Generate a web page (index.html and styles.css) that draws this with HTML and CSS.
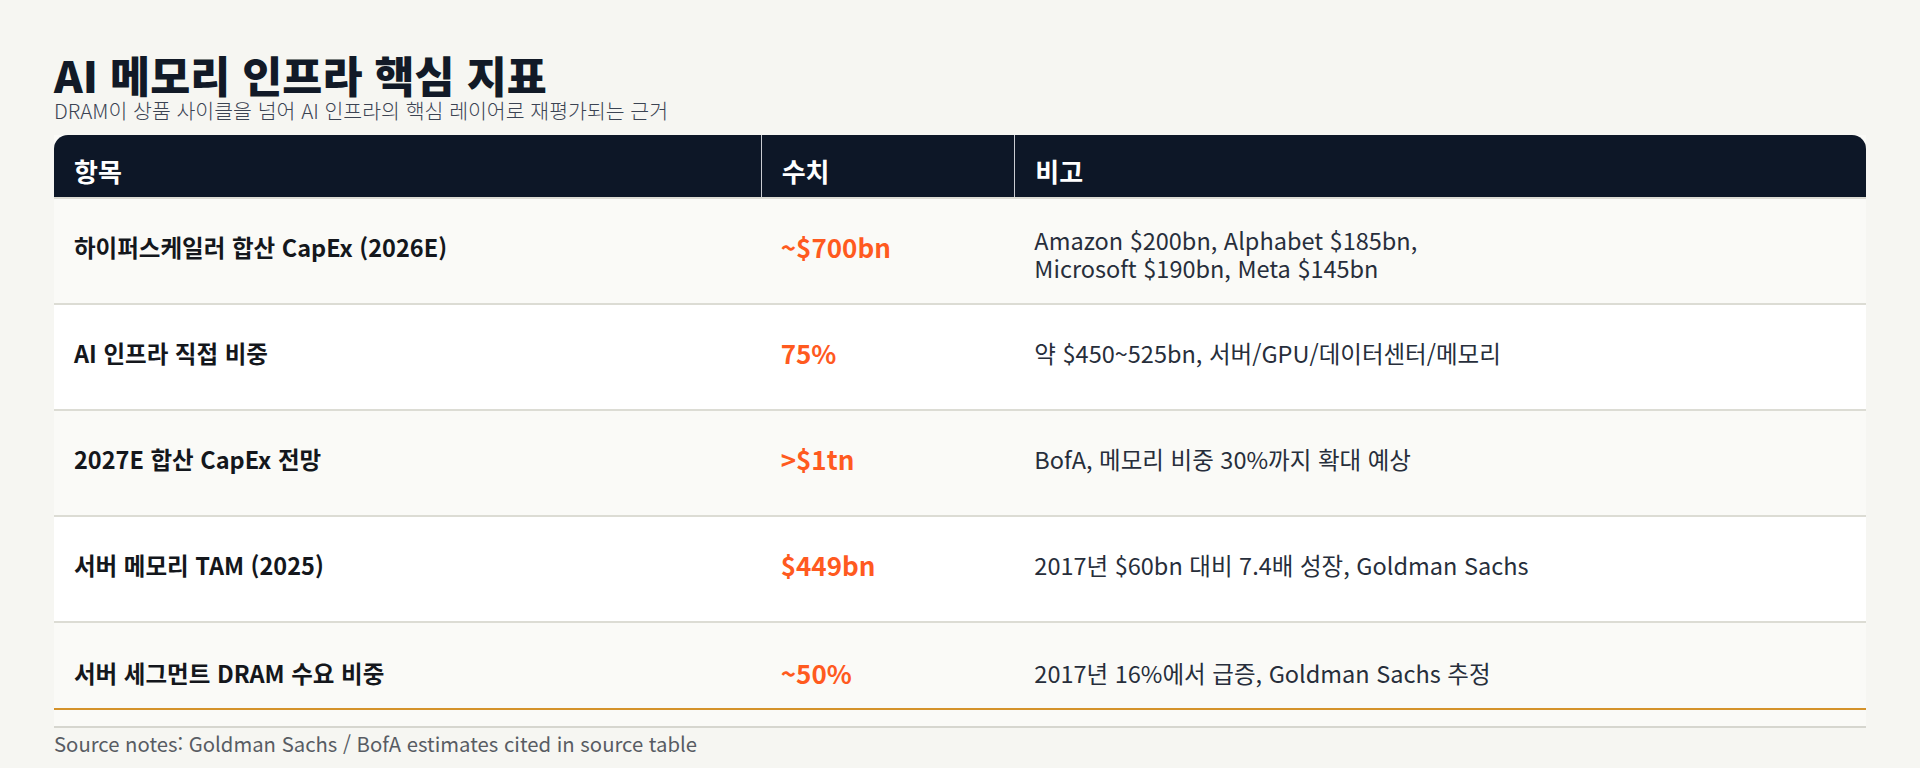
FILE: index.html
```html
<!DOCTYPE html>
<html lang="ko">
<head>
<meta charset="utf-8">
<title>AI 메모리 인프라 핵심 지표</title>
<link rel="stylesheet" href="styles.css">
</head>
<body>
<main class="page">
  <header class="heading">
    <h1 class="title">AI 메모리 인프라 핵심 지표</h1>
    <p class="subtitle">DRAM이 상품 사이클을 넘어 AI 인프라의 핵심 레이어로 재평가되는 근거</p>
  </header>

  <section class="table">
    <div class="row head">
      <div class="cell">항목</div>
      <div class="cell divided">수치</div>
      <div class="cell divided">비고</div>
    </div>
    <div class="row odd">
      <div class="cell label">하이퍼스케일러 합산 CapEx (2026E)</div>
      <div class="cell value">~$700bn</div>
      <div class="cell note two-line">Amazon $200bn, Alphabet $185bn,<br>Microsoft $190bn, Meta $145bn</div>
    </div>
    <div class="row even">
      <div class="cell label">AI 인프라 직접 비중</div>
      <div class="cell value">75%</div>
      <div class="cell note">약 $450~525bn, 서버/GPU/데이터센터/메모리</div>
    </div>
    <div class="row odd">
      <div class="cell label">2027E 합산 CapEx 전망</div>
      <div class="cell value">&gt;$1tn</div>
      <div class="cell note">BofA, 메모리 비중 30%까지 확대 예상</div>
    </div>
    <div class="row even">
      <div class="cell label">서버 메모리 TAM (2025)</div>
      <div class="cell value">$449bn</div>
      <div class="cell note">2017년 $60bn 대비 7.4배 성장, Goldman Sachs</div>
    </div>
    <div class="row odd last">
      <div class="cell label">서버 세그먼트 DRAM 수요 비중</div>
      <div class="cell value">~50%</div>
      <div class="cell note">2017년 16%에서 급증, Goldman Sachs 추정</div>
    </div>
    <div class="table-foot"></div>
  </section>

  <p class="source">Source notes: Goldman Sachs / BofA estimates cited in source table</p>
</main>
</body>
</html>
```

FILE: styles.css
```css
* { box-sizing: border-box; }

html, body {
  margin: 0;
  padding: 0;
}

body {
  background: #f6f6f2;
  font-family: "Noto Sans CJK KR", "Noto Sans", sans-serif;
  color: #14171c;
}

.page {
  padding: 52px 54px 0;
}

.heading {
  margin: 0;
}

.title {
  margin: 0;
  font-size: 43.5px;
  line-height: 46px;
  font-weight: 900;
  color: #121a27;
}

.subtitle {
  margin: 0;
  font-size: 20.5px;
  line-height: 24px;
  font-weight: 300;
  color: #3b4352;
}

.table {
  margin-top: 13px;
  background: #fafaf7;
}

.row {
  display: grid;
  grid-template-columns: 39fr 14fr 47fr;
  align-items: center;
}

.head {
  height: 62px;
  background: #0d1727;
  color: #ffffff;
  border-radius: 14px 14px 0 0;
  align-items: stretch;
}

.head .cell {
  font-size: 26px;
  font-weight: 700;
  line-height: 30px;
  padding: 21px 20px 11px;
}

.head .divided {
  border-left: 1px solid #c9ccd2;
}

.row.odd { background: #fafaf7; }
.row.even { background: #ffffff; }

.row.odd, .row.even {
  height: 106px;
  padding-bottom: 8px;
  border-top: 2px solid #dcdcd4;
}

.row.last {
  height: 89px;
  padding-top: 15px;
  padding-bottom: 0;
  border-bottom: 2px solid #d4922a;
}

.cell {
  padding: 0 20px;
}

.label {
  font-size: 23.5px;
  line-height: 28px;
  font-weight: 700;
  color: #14171c;
}

.value {
  font-size: 26px;
  line-height: 28px;
  font-weight: 700;
  color: #ff5a1f;
}

.note {
  font-size: 23.5px;
  line-height: 28px;
  font-weight: 400;
  color: #272e3b;
}

.note.two-line {
  padding-top: 13px;
}

.table-foot {
  height: 18px;
  background: #fafaf7;
  border-bottom: 2px solid #d6d6cf;
}

.source {
  margin: 3px 0 0;
  font-size: 20.3px;
  line-height: 24px;
  color: #585c63;
}
```
